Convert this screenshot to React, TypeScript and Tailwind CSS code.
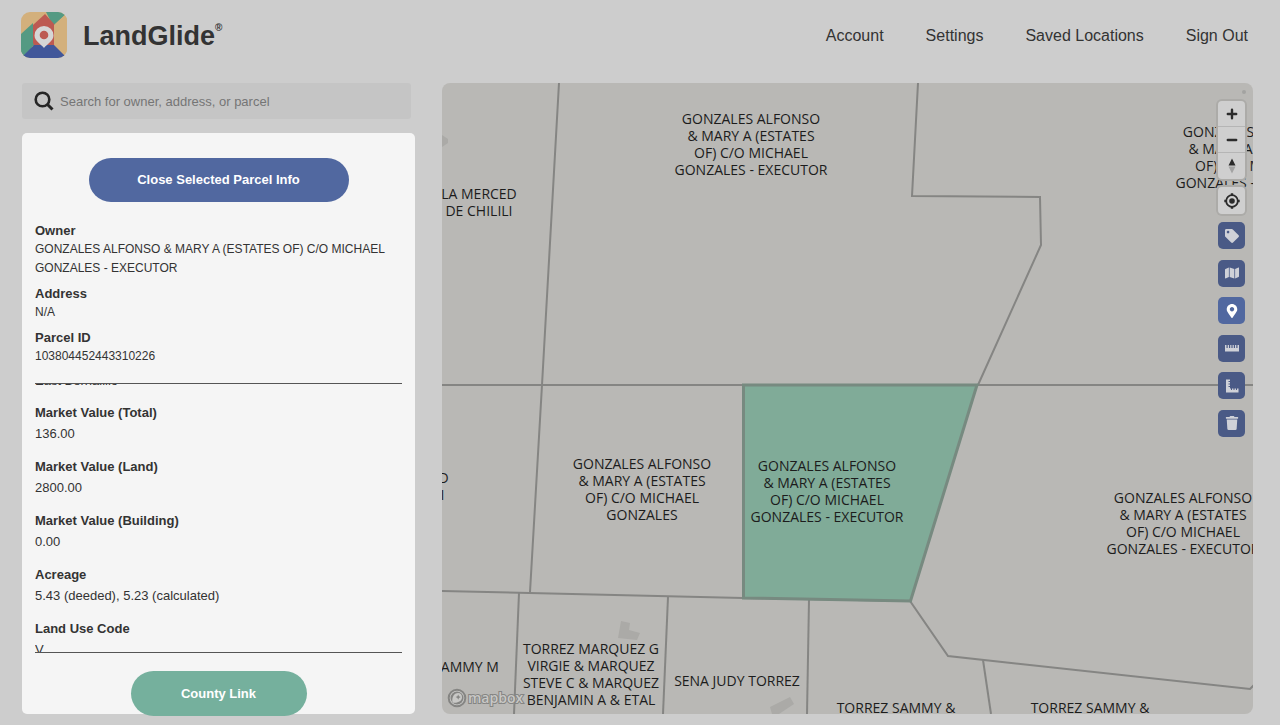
import clsx from 'clsx';
import { FaMap, FaMapMarkerAlt, FaTag, FaTrash } from 'react-icons/fa';

const navLinks = ['Account', 'Settings', 'Saved Locations', 'Sign Out'];

const summary = [
  {
    label: 'Owner',
    value: 'GONZALES ALFONSO & MARY A (ESTATES OF) C/O MICHAEL GONZALES - EXECUTOR',
  },
  { label: 'Address', value: 'N/A' },
  { label: 'Parcel ID', value: '103804452443310226' },
];

const details = [
  { label: 'Market Value (Total)', value: '136.00' },
  { label: 'Market Value (Land)', value: '2800.00' },
  { label: 'Market Value (Building)', value: '0.00' },
  { label: 'Acreage', value: '5.43 (deeded), 5.23 (calculated)' },
  { label: 'Land Use Code', value: 'V' },
];

const executor = [
  'GONZALES ALFONSO',
  '& MARY A (ESTATES',
  'OF) C/O MICHAEL',
  'GONZALES - EXECUTOR',
];

// Each label is centred on its parcel
const parcelLabels = [
  { place: 'left-[309px] top-[61px]', lines: executor },
  { place: 'left-[810px] top-[74px]', lines: executor },
  { place: 'left-[37px] top-[119px]', lines: ['LA MERCED', 'DE CHILILI'] },
  { place: 'left-[-31px] top-[403px]', lines: ['LA MERCED', 'DE CHILILI'] },
  {
    place: 'left-[200px] top-[406px]',
    lines: ['GONZALES ALFONSO', '& MARY A (ESTATES', 'OF) C/O MICHAEL', 'GONZALES'],
  },
  { place: 'left-[385px] top-[408px]', lines: executor },
  { place: 'left-[741px] top-[440px]', lines: executor },
  { place: 'left-[24px] top-[583px]', lines: ['SAMMY M'] },
  {
    place: 'left-[149px] top-[591px]',
    lines: ['TORREZ MARQUEZ G', 'VIRGIE & MARQUEZ', 'STEVE C & MARQUEZ', 'BENJAMIN A & ETAL'],
  },
  { place: 'left-[295px] top-[597px]', lines: ['SENA JUDY TORREZ'] },
  { place: 'left-[454px] top-[624px]', lines: ['TORREZ SAMMY &'] },
  { place: 'left-[648px] top-[624px]', lines: ['TORREZ SAMMY &'] },
];

function RulerIcon({ className }: { className?: string }) {
  return (
    <svg viewBox="0 0 14 14" className={className} fill="currentColor">
      <path d="M0 4 H1.500 V7 H2.700 V4 H4 V7 H5.200 V4 H6.400 V7 H7.600 V4 H8.800 V7 H10 V4 H11.300 V7 H12.500 V4 H14 V10.500 H0 Z" />
    </svg>
  );
}

function AreaIcon({ className }: { className?: string }) {
  return (
    <svg viewBox="0 0 14 14" className={className} fill="currentColor">
      <path d="M1 0.500 H5 V2 H3.500 V3 H5 V4.500 H3.500 V5.500 H5 V7 H3.500 V8 H5 V9.500 H6 V11 H7 V9.500 H8.500 V11 H9.500 V9.500 H11 V11 H12 V9.500 H13.500 V13.500 H1 Z" />
    </svg>
  );
}

const tools = [
  { name: 'Labels', Icon: FaTag },
  { name: 'Map style', Icon: FaMap },
  { name: 'Drop pin', Icon: FaMapMarkerAlt, active: true },
  { name: 'Measure distance', Icon: RulerIcon },
  { name: 'Measure area', Icon: AreaIcon },
  { name: 'Clear', Icon: FaTrash },
];

function Logo() {
  return (
    <a href="#" className="flex items-center gap-4">
      <svg viewBox="0 0 46 46" className="size-[46px]" aria-hidden="true">
        <clipPath id="logo-clip">
          <rect width="46" height="46" rx="9" />
        </clipPath>
        <g clipPath="url(#logo-clip)">
          <rect width="46" height="46" fill="#d3b07c" />
          <path d="M0 22 L12 11 V33 L5 46 H0 Z" fill="#549a83" />
          <path d="M25 0 H44 V3 L32 14 Z" fill="#549a83" />
          <path d="M12 13 L24 2 L34 13 V34 H12 Z" fill="#bd5a52" />
          <path d="M33 13 L46 1 V46 L33 34 Z" fill="#d3b07c" />
          <path d="M0 46 L13 33 H33 L46 46 Z" fill="#41579a" />
          <path d="M0 44 V38 L12 31 L13 33 Z" fill="#549a83" />
          <path
            d="M23 14 a9.500 9.500 0 0 1 9.500 9.500 C32.500 29 26 32 23 36 C20 32 13.500 29 13.500 23.500 A9.500 9.500 0 0 1 23 14 Z"
            fill="#d6d6d6"
          />
          <circle cx="23" cy="23" r="4.300" fill="#bd5a52" />
        </g>
      </svg>
      <span className="flex items-start pt-0.5 text-[#333]">
        <span className="text-[27px] leading-8 font-bold">LandGlide</span>
        <span className="text-[10px] leading-4 font-bold">®</span>
      </span>
    </a>
  );
}

function Header() {
  return (
    <header className="flex h-[70px] items-center justify-between pr-8 pl-[21px]">
      <Logo />
      <nav className="flex gap-[42px] pt-0.5">
        {navLinks.map((link) => (
          <a key={link} href="#" className="text-base text-[#333]">
            {link}
          </a>
        ))}
      </nav>
    </header>
  );
}

function Search() {
  return (
    <label className="mr-1 flex h-9 items-center gap-1.5 rounded-[3px] bg-[#c5c5c5] pl-3">
      <svg viewBox="0 0 20 20" className="size-5 shrink-0" fill="none" stroke="#262626" aria-hidden="true">
        <circle cx="8.500" cy="8.500" r="6.800" strokeWidth="2.600" />
        <path d="M13.500 13.500 L18.500 18.500" strokeWidth="3" />
      </svg>
      <input
        type="text"
        aria-label="Search for owner, address, or parcel"
        placeholder="Search for owner, address, or parcel"
        className="w-full bg-transparent pt-0.5 text-[13px] outline-none placeholder:text-[#757575]"
      />
    </label>
  );
}

function ParcelPanel() {
  return (
    <section className="flex flex-col items-center rounded-[5px] bg-[#f5f5f5] px-[13px] pt-[25px] text-[13px] text-[#333]">
      <button className="h-11 w-[260px] rounded-full bg-[#5168a0] font-bold text-white">
        Close Selected Parcel Info
      </button>
      <dl className="mt-[19px] flex w-full flex-col gap-1.5 leading-[19px]">
        {summary.map(({ label, value }) => (
          <div key={label}>
            <dt className="font-bold">{label}</dt>
            <dd className="text-xs leading-[19px]">{value}</dd>
          </div>
        ))}
      </dl>
      <div className="mt-[17px] h-[270px] w-full overflow-hidden border-y border-[#555] leading-[21px]">
        {/* scrolled past the first entry */}
        <p className="-mt-3.5">East Bernalillo</p>
        <dl className="mt-[11px] flex flex-col gap-3">
          {details.map(({ label, value }) => (
            <div key={label}>
              <dt className="font-bold">{label}</dt>
              <dd>{value}</dd>
            </div>
          ))}
        </dl>
      </div>
      <button className="mt-[18px] -mb-0.5 h-[45px] w-44 rounded-full bg-[#75b09d] font-bold text-white">
        County Link
      </button>
    </section>
  );
}

function MapControls() {
  return (
    <div className="absolute top-[18px] right-2 flex w-[27px] flex-col">
      <div className="flex flex-col divide-y divide-[#b5b5b5] rounded-sm bg-[#cfcfcf] shadow-[0_0_0_2px_#acaba8]">
        <button aria-label="Zoom in" className="flex h-[26px] items-center justify-center">
          <svg viewBox="0 0 12 12" className="size-3" stroke="#2b2b2b" strokeWidth="2.400" strokeLinecap="round">
            <path d="M6 1.800 V10.200 M1.800 6 H10.200" />
          </svg>
        </button>
        <button aria-label="Zoom out" className="flex h-[26px] items-center justify-center">
          <svg viewBox="0 0 12 12" className="size-3" stroke="#2b2b2b" strokeWidth="2.400" strokeLinecap="round">
            <path d="M1.800 6 H10.200" />
          </svg>
        </button>
        <button aria-label="Reset bearing" className="flex h-[26px] items-center justify-center">
          <svg viewBox="0 0 8 16" className="h-4 w-2">
            <path d="M0.500 7.500 L4 0.500 L7.500 7.500 Z" fill="#2b2b2b" />
            <path d="M0.500 8.500 L4 15.500 L7.500 8.500 Z" fill="#a3a3a3" />
          </svg>
        </button>
      </div>
      <button
        aria-label="Find my location"
        className="mt-2 flex h-[27px] items-center justify-center rounded-sm bg-[#cfcfcf] shadow-[0_0_0_2px_#acaba8]"
      >
        <svg viewBox="0 0 16 16" className="size-4" fill="none" stroke="#2b2b2b">
          <circle cx="8" cy="8" r="5.800" strokeWidth="1.800" />
          <circle cx="8" cy="8" r="2.800" fill="#2b2b2b" stroke="none" />
          <path d="M8 0.300 V3 M8 13 V15.700 M0.300 8 H3 M13 8 H15.700" strokeWidth="2.400" />
        </svg>
      </button>
      <div className="mt-2 flex h-[215px] flex-col justify-between">
        {tools.map(({ name, Icon, active }) => (
          <button
            key={name}
            aria-label={name}
            className={clsx(
              'flex h-[27px] items-center justify-center rounded-[5px]',
              active ? 'bg-[#5168a0] text-white' : 'bg-[#4a5a86] text-[#cfd1d8]',
            )}
          >
            <Icon className="size-3.5" />
          </button>
        ))}
      </div>
    </div>
  );
}

function ParcelMap() {
  return (
    <section
      aria-label="Parcel map"
      className="relative flex-1 overflow-hidden rounded-lg bg-[#b9b8b5] font-['Open_Sans',sans-serif]"
    >
      <svg
        width="811"
        height="631"
        className="absolute top-0 left-0 overflow-visible"
        fill="none"
        stroke="#858583"
        strokeWidth="2"
        aria-hidden="true"
      >
        <g fill="#abaaa7" stroke="none">
          <path d="M179 538 L188 540 L187 547 L198 550 L195 557 L176 555 Z" />
          <path d="M328 624 L348 614 L352 621 L337 631 H330 Z" />
          <path d="M0 52 L6 56 L6 60 L0 64 Z" />
        </g>
        <path d="M117 0 L100 302 L88 509" />
        <path d="M476 0 L470 113 L598 114 L599 162 L536 302" />
        <path d="M0 302 H811" />
        <path d="M0 508 L301 515 L468 518 L506 573 L808 606 L812 602" />
        <path d="M77 510 L72 631" />
        <path d="M226 514 L221 631" />
        <path d="M367 517 L365 631" />
        <path d="M541 577 L549 631" />
        <path
          d="M301.500 302 H535 L468.500 518 L301.500 515 Z"
          fill="#80ab98"
          stroke="#778a80"
          strokeWidth="3"
        />
        <circle cx="802" cy="9" r="2" fill="#a3a3a1" stroke="none" />
      </svg>
      <a
        href="#"
        aria-label="mapbox"
        className="absolute bottom-1.5 left-[5px] flex items-center gap-1"
      >
        <svg viewBox="0 0 88 20" className="h-5 w-[88px]">
          <circle cx="10" cy="10" r="8.300" fill="#c8c8c6" stroke="#858583" strokeWidth="2" />
          <circle cx="10" cy="10" r="6.500" fill="#858583" />
          <path d="M5.500 14.500 C4.500 8 8 5 11 5 a4.200 4.200 0 0 1 4 4.200 C15 13 10.500 15.500 5.500 14.500 Z" fill="#c8c8c6" />
          <path d="M11.200 6.500 l.8 1.800 1.800 .8 -1.800 .8 -.8 1.800 -.8 -1.800 -1.800 -.8 1.800 -.8 Z" fill="#858583" />
          <text
            x="21"
            y="15"
            fill="#c8c8c6"
            stroke="#858583"
            strokeWidth="2"
            paintOrder="stroke"
            className="font-['Open_Sans',sans-serif] text-sm font-semibold"
          >
            mapbox
          </text>
        </svg>
      </a>
      {parcelLabels.map(({ place, lines }) => (
        <p
          key={place}
          className={clsx(
            'absolute -translate-x-1/2 -translate-y-1/2 text-center text-sm leading-[17px] whitespace-pre text-[#1c1c1c]',
            place,
          )}
        >
          {lines.join('\n')}
        </p>
      ))}
      <MapControls />
    </section>
  );
}

export default function App() {
  return (
    <div className="min-h-screen bg-[#cdcdcd] font-['Liberation_Sans',Arial,sans-serif]">
      <Header />
      <main className="flex gap-[27px] pt-[13px] pr-[27px] pb-3 pl-[22px]">
        <div className="flex w-[393px] shrink-0 flex-col gap-3.5">
          <Search />
          <ParcelPanel />
        </div>
        <ParcelMap />
      </main>
    </div>
  );
}
